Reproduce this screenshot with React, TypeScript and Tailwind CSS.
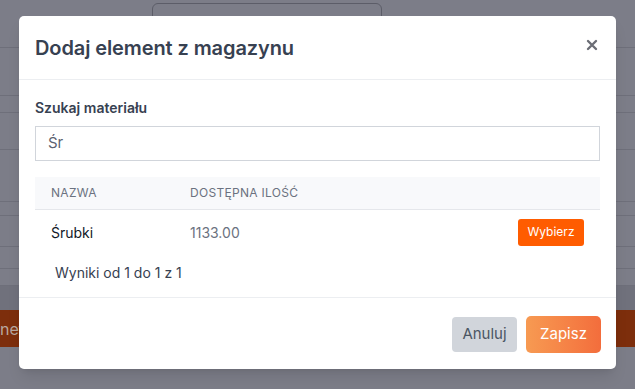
import React from 'react'

const rows = [48, 17, 37, 52, 14, 31, 22, 17]

export default function App() {
    return (
        <div className="relative w-[635px] h-[389px] overflow-hidden bg-[#7c7d88] font-['Inter',sans-serif]">
            {/* background page, dimmed */}
            <div className="flex flex-col">
                <div className="h-[48px] border-b border-[#6e6f7a] pl-[152px] pt-[3px]">
                    <div className="w-[230px] h-[40px] rounded-md border border-[#5c5d68] flex items-center justify-between px-3 text-[13px] text-[#3f404a]">
                        <span>Altowanie</span>
                        <span>▾</span>
                    </div>
                </div>
                {rows.map((h, i) => (
                    <div key={i} className="border-b border-[#6e6f7a]" style={{ height: h }} />
                ))}
                <div className="h-[24px] bg-[#70717c]" />
                <div className="h-[37px] bg-[#7d2e0c] flex items-center text-[16px] text-[#b9a89f]">
                    net
                </div>
            </div>

            {/* modal */}
            <div className="absolute left-[19px] top-[16px] w-[597px] h-[353px] bg-white rounded-[5px] shadow-lg flex flex-col">
                <div className="h-[64px] flex items-center justify-between px-4 border-b border-[#eceef1]">
                    <h2 className="text-[20px] font-semibold text-[#374151] tracking-[-0.1px]">Dodaj element z magazynu</h2>
                    <svg width="12" height="12" viewBox="0 0 12 12" className="mr-[2px] mt-[-6px]">
                        <path d="M2 2L10 10M10 2L2 10" stroke="#6b6d75" strokeWidth="2.4" strokeLinecap="round" />
                    </svg>
                </div>
                <div className="px-4 pt-[18px] flex-1">
                    <label className="block text-[14px] font-semibold text-[#374151] leading-5">Szukaj materiału</label>
                    <div className="mt-[8px] h-[35px] border border-[#d1d5db] flex items-center px-3 text-[15px] text-[#5b6170]">
                        Śr
                    </div>
                    <div className="mt-[16px]">
                        <div className="h-[33px] bg-[#f8f9fb] border-b border-[#e5e7eb] flex items-center px-4 text-[12px] text-[#6b7280] tracking-[0.3px]">
                            <div className="w-[139px]">NAZWA</div>
                            <div>DOSTĘPNA ILOŚĆ</div>
                        </div>
                        <div className="h-[44px] flex items-center px-4 text-[14px]">
                            <div className="w-[139px] text-[#111827]">Śrubki</div>
                            <div className="flex-1 text-[#6b7280]">1133.00</div>
                            <button className="h-[27px] w-[66px] rounded-[3px] bg-[#ff5c00] text-white text-[12px]">Wybierz</button>
                        </div>
                        <div className="pl-[20px] pt-[8px] text-[14px] text-[#374151]">Wyniki od 1 do 1 z 1</div>
                    </div>
                </div>
                <div className="h-[72px] border-t border-[#eceef1] flex items-center justify-end gap-[9px] pl-4 pr-[15px] pt-[2px]">
                    <button className="h-[35px] w-[65px] rounded-[4px] bg-[#d1d5db] text-[#4b5563] text-[15px]">Anuluj</button>
                    <button className="h-[37px] w-[75px] rounded-[5px] bg-gradient-to-r from-[#f79a52] to-[#f36d3c] text-white text-[15px]">Zapisz</button>
                </div>
            </div>
        </div>
    )
}
